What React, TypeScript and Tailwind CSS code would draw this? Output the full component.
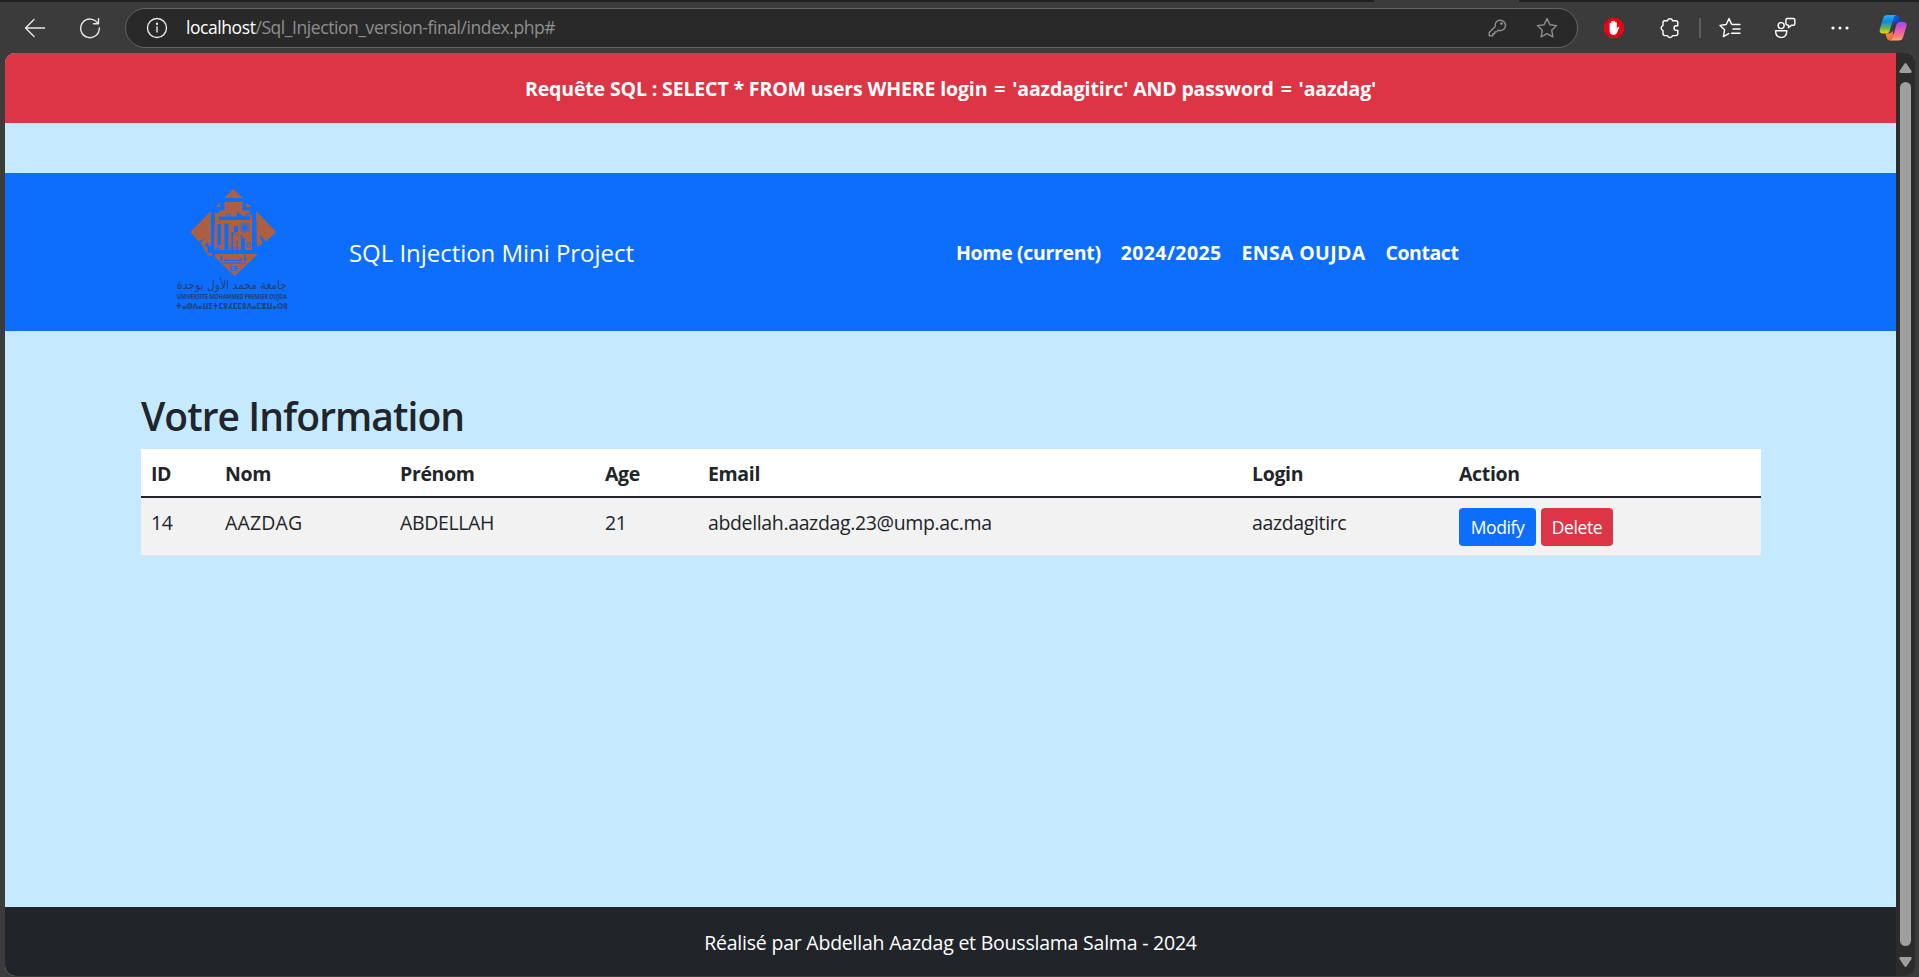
import type { ReactNode } from "react";

function Icon({ children, className }: { children: ReactNode; className: string }) {
  return (
    <svg viewBox="0 0 24 24" width="24" height="24" fill="none" strokeWidth="1.4" strokeLinecap="round" strokeLinejoin="round" className={`shrink-0 ${className}`}>
      {children}
    </svg>
  );
}

function CopilotLogo() {
  return (
    <svg viewBox="0 0 28 28" width="28" height="28" className="ml-[39px] shrink-0">
      <defs>
        <linearGradient id="cpLeft" x1="0" y1="0" x2="0" y2="1">
          <stop offset="0" stopColor="#22b4f5" />
          <stop offset="0.35" stopColor="#1287e0" />
          <stop offset="0.7" stopColor="#5fb35c" />
          <stop offset="1" stopColor="#fbd408" />
        </linearGradient>
        <linearGradient id="cpRight" x1="0" y1="0" x2="0" y2="1">
          <stop offset="0" stopColor="#9a4cf2" />
          <stop offset="0.45" stopColor="#e957b4" />
          <stop offset="0.8" stopColor="#fb7f77" />
          <stop offset="1" stopColor="#fdb15c" />
        </linearGradient>
        <linearGradient id="cpTop" x1="0" y1="0" x2="1" y2="1">
          <stop offset="0" stopColor="#1668dd" />
          <stop offset="1" stopColor="#0b2fc0" />
        </linearGradient>
        <linearGradient id="cpBottom" x1="0" y1="0" x2="1" y2="1">
          <stop offset="0" stopColor="#fba33c" />
          <stop offset="1" stopColor="#ee4f3c" />
        </linearGradient>
      </defs>
      <path d="M15 1h2c1.900 0 2.800 1 3.400 2.800L21.600 8h-3.200c-2 0-3 .8-3.600 3L13 4z" fill="url(#cpTop)" />
      <path d="M13 26.500h-2c-1.900 0-2.700-1-3.300-2.800L6.500 19.400h3c2 0 3-.8 3.600-3L15.200 23z" fill="url(#cpBottom)" />
      <path d="M8.800 1h8.400c-1.500.3-2.200 1.500-2.800 3.500l-3.600 12c-.7 2.200-1.700 3-3.800 3H4c-3 0-3.900-1.500-3.200-4.200L4 4.500C4.700 2 6 1 8.800 1z" fill="url(#cpLeft)" />
      <path d="M19.400 26.500H11c1.500-.3 2.200-1.500 2.800-3.500l3.500-11.800c.7-2.200 1.800-3.200 3.900-3.200h3c3 0 3.900 1.500 3.200 4.200L24.200 23c-.8 2.500-2 3.500-4.800 3.500z" fill="url(#cpRight)" />
    </svg>
  );
}

function Toolbar() {
  return (
    <header className="flex h-[53px] shrink-0 flex-col">
      <div className="flex h-[2px] bg-[#202020]">
        <div className="ml-[1374px] w-[145px] bg-[#3b3b3b]" />
      </div>
      <div className="flex h-[51px] items-center">
        <Icon className="ml-[23px] stroke-[#e8e8e8]">
          <path d="M21.500 12H2.500M11 3.500 2.500 12l8.500 8.500" />
        </Icon>
        <Icon className="ml-[31px] stroke-[#e8e8e8]">
          <path d="M20.500 2.800v5h-5M20 7.600A9.300 9.300 0 1 0 21.300 12" />
        </Icon>
        <div className="ml-[23px] flex h-[40px] w-[1453px] items-center rounded-full border border-[#646464] bg-[#292929]">
          <Icon className="ml-[19px] stroke-[#e8e8e8]">
            <circle cx="12" cy="12" r="9.500" />
            <path d="M12 10.800V16" />
            <circle cx="12" cy="7.800" r="0.500" className="fill-[#e8e8e8]" />
          </Icon>
          <div className="ml-[17px] pb-px text-[17.500px] leading-6 tracking-[-0.430px] text-[#8f8f8f]">
            <span className="text-white">localhost</span>/Sql_Injection_version-final/index.php#
          </div>
          <Icon className="ml-auto stroke-[#8e8e8e]">
            <path d="M14.500 4.300a5.200 5.200 0 1 1-1.300 9.900l-1.700 1.700H9.700v1.900H7.900v1.900H4.200v-3.200l6-6A5.200 5.200 0 0 1 14.500 4.300z" />
            <circle cx="16.500" cy="7.600" r="0.700" className="fill-[#8e8e8e]" />
          </Icon>
          <Icon className="mr-[18px] ml-[26px] stroke-[#8e8e8e]">
            <path d="m12 2.600 2.900 6.100 6.700.9-4.900 4.600 1.200 6.700-5.900-3.300-5.900 3.300 1.200-6.700L2.400 9.600l6.700-.9z" />
          </Icon>
        </div>
        <Icon className="ml-[24px]">
          <path d="M7.900 2h8.200L22 7.900v8.200L16.100 22H7.900L2 16.100V7.900z" fill="#e30613" />
          <path d="M7.600 12V7.300a.9.900 0 0 1 1.700 0V5.800a.95.950 0 0 1 1.800-.3.950.950 0 0 1 1.900.3v.7a.95.950 0 0 1 1.800.2v6l.9-1.500c.6-1 2-.6 1.500.5L15.300 16c-.7 1.900-1.900 2.900-3.700 2.900-2.700 0-4-1.700-4-3.900z" fill="#fff" />
        </Icon>
        <Icon className="ml-[32px] stroke-white">
          <path d="M6 4.700h3.400a2.700 2.700 0 0 1 5.200 0h3.200c1.200 0 2 .8 2 2v3.100h-1.500a2.300 2.300 0 0 0 0 4.600h1.500v3.200c0 1.200-.8 2-2 2h-3.200a2.700 2.700 0 0 1-5.200 0H7c-1.200 0-2-.8-2-2v-3a2.600 2.600 0 0 1 0-5V6.700c0-1.200.8-2 2-2z" />
        </Icon>
        <div className="ml-[17px] h-5 w-[2px] bg-[#5d5d5d]" />
        <Icon className="ml-[17px] stroke-white">
          <path d="M14.500 8.500 13.700 8.400 11 2.600 8.200 8.500 2 9.400l4.600 4.400-1.200 6.800 5.300-3M14.500 8.500h7.500M15 13h7M13.500 17.300H22" />
        </Icon>
        <Icon className="ml-[31px] stroke-white">
          <circle cx="8.200" cy="9.600" r="3" />
          <path d="M2.600 14.700h11.200c0 4.200-2.200 6.700-5.600 6.700s-5.600-2.500-5.600-6.700zM14.200 2.500h6.300c.8 0 1.300.5 1.300 1.300v4.100c0 .8-.5 1.300-1.300 1.300h-2l-3 2.600V9.200c-1.300 0-2.600-.4-2.600-1.700V3.800c0-.8.500-1.300 1.300-1.300z" />
        </Icon>
        <Icon className="ml-[31px] fill-white">
          <circle cx="5" cy="12" r="1.600" />
          <circle cx="12" cy="12" r="1.600" />
          <circle cx="19" cy="12" r="1.600" />
        </Icon>
        <div className="-ml-[12px]">
          <CopilotLogo />
        </div>
      </div>
    </header>
  );
}

function UniversityLogo() {
  return (
    <svg viewBox="0 0 184 150" width="184" height="150" className="mt-[5px] shrink-0">
      <g fill="#b0603f">
        <path d="M68.300 9 77.500 18H59z" />
        <path d="M59.500 22H77.500v8.500h7.200v6H78l-6-5v5H52.500l2-6h5z" />
        <path d="M55 22.500v4.500h-4zM81.500 22.500l4.500 4.500h-4.500z" />
        <path d="M46 31v35H43.500l-.5-4-4 3.500 3.500 2v5.500H47v2.500H43L35.500 63l5-5-7 3.500-8-9.500z" />
        <path d="M91 31 111 52 101 61.500l-6.500-7 3 9.500-5.500 2.500z" />
        <path d="M50 33h4v7h31v-6h2v36H49z" />
        <path d="M50 74h43L69.500 96 50 77z" />
      </g>
      <g fill="#0d6efd">
        <path d="M52.500 44h3.500v21h-3.500zM59.500 43.500h4v28h-4zM66.500 52h1.500v18h-1.500zM69 46h4v6h-4zM76 55h1.500v15H76z" />
        <circle cx="79.800" cy="47.500" r="2.600" />
        <circle cx="79.800" cy="47.500" r="5.500" opacity="0.450" />
        <path d="M76.500 60c2-4 4-2 3.600 2v8h-3zM50 71h37v1.600H50z" />
        <path d="M54 37h12v1.500H54zM74 37l6-1.500v3h-6zM55.500 76h2v5h-2zM59 79l4 1h10l4-2v3H59zM79 75h1.700v6H79zM56 82.500h25v1H56z" />
      </g>
      <g fill="none" stroke="#0d6efd" strokeWidth="0.900">
        <path d="M61.500 34h3.600v3.500h-3.600zM81.500 34h3.500v3.500h-3.500zM66 54.500l4-1.500 4 3M82 63h3.500v4H82zM50 68.500h5M52.500 66v5M66 86.500h5.500v4H66zM68 88.500h5M72 60v9M64 68h8" />
      </g>
      <g stroke="#0d6efd" strokeWidth="0.500" strokeDasharray="1 1.700" opacity="0.550">
        <path d="M63 24 60 35M66 23l-1 11M70 23v11M74 23l-1 11M31 48l14-1M29 51l16 0M31 54l14-2M93 38l8 9M93 45l14 6M94 50l12 4M52 75l10 6M60 75l8 18M76 75l-6 18M84 75 72 92" />
      </g>
      <g fill="#233f72">
        <text x="67" y="109" textAnchor="middle" textLength="110" lengthAdjust="spacingAndGlyphs" fontSize="12" direction="rtl" className="font-['DejaVu_Sans',sans-serif]">جامعة محمد الأول بوجدة</text>
        <text x="12" y="119" textLength="110" lengthAdjust="spacingAndGlyphs" fontSize="6.800" fontWeight="700" className="font-['Open_Sans',sans-serif]">UNIVERSITE MOHAMMED PREMIER OUJDA</text>
        <text x="11" y="128.500" textLength="112" lengthAdjust="spacingAndGlyphs" fontSize="8.500" fontWeight="700" className="font-['DejaVu_Sans',sans-serif]">ⵜⴰⵙⴷⴰⵡⵉⵜⵎⵓⵃⵎⵎⵓⴷⴰⵎⵣⵡⴰⵔⵓ</text>
      </g>
    </svg>
  );
}

const headers = ["ID", "Nom", "Prénom", "Age", "Email", "Login", "Action"];
const record = ["14", "AAZDAG", "ABDELLAH", "21", "abdellah.aazdag.23@ump.ac.ma", "aazdagitirc"];

function Records() {
  return (
    <table className="w-[1620px] table-fixed border-separate border-spacing-0 text-left text-[19.500px] text-[#212529]">
      <colgroup>
        <col className="w-[74px]" />
        <col className="w-[175px]" />
        <col className="w-[205px]" />
        <col className="w-[103px]" />
        <col className="w-[544px]" />
        <col className="w-[207px]" />
        <col />
      </colgroup>
      <thead>
        <tr className="bg-white">
          {headers.map((h) => (
            <th key={h} className="h-[49px] border-b-2 border-[#212529] px-[10px] pt-[3px] pb-0 leading-[30px] font-bold tracking-[-0.350px]">{h}</th>
          ))}
        </tr>
      </thead>
      <tbody>
        <tr className="bg-[#f2f2f2] align-top">
          {record.map((v) => (
            <td key={v} className={`h-[58px] border-b border-[#dee2e6] px-[10px] pt-[10px] pb-0 leading-[30px] ${v === "AAZDAG" ? "tracking-[0.150px]" : "tracking-[-0.360px]"}`}>{v}</td>
          ))}
          <td className="h-[58px] border-b border-[#dee2e6] px-[10px] pt-[10px] pb-0">
            <div className="flex gap-[5px] text-[17.500px] leading-[38px] tracking-[-0.400px] text-white">
              <button className="h-[38px] w-[77px] rounded-[4px] bg-[#0d6efd]">Modify</button>
              <button className="h-[38px] w-[72px] rounded-[4px] bg-[#dc3545]">Delete</button>
            </div>
          </td>
        </tr>
      </tbody>
    </table>
  );
}

function Page() {
  return (
    <div className="flex w-[1891px] flex-col bg-[#c5eaff]">
      <div className="h-[70px] bg-[#dc3545] pt-[2px] text-center text-[19.500px] leading-[68px] font-bold tracking-[-0.140px] text-white">
        Requête SQL : SELECT * FROM users WHERE login <span className="px-[2px]">=</span> 'aazdagitirc' AND password <span className="px-[2px]">=</span> 'aazdag'
      </div>
      <nav className="mt-[50px] flex h-[158px] items-center bg-[#0d6efd] pl-[160px] text-white">
        <UniversityLogo />
        <span className="w-[607px] pt-px text-[24px] tracking-[-0.040px]">SQL Injection Mini Project</span>
        <div className="flex gap-5 pt-[2px] text-[19.500px] font-bold">
          <a className="tracking-[-0.330px]">Home (current)</a>
          <a className="tracking-[0.400px]">2024/2025</a>
          <a className="tracking-[0.330px]">ENSA OUJDA</a>
          <a className="tracking-[-0.440px]">Contact</a>
        </div>
      </nav>
      <main className="flex flex-1 flex-col pt-[61px] pl-[136px]">
        <h1 className="mb-[9px] text-[39px] leading-[48px] font-[560] tracking-[-0.940px] text-[#212529]">Votre Information</h1>
        <Records />
      </main>
      <footer className="flex h-[69px] items-center justify-center bg-[#212529] pt-[2px] text-[19.500px] tracking-[-0.220px] text-white">
        Réalisé par Abdellah Aazdag et Bousslama Salma - 2024
      </footer>
    </div>
  );
}

function Scrollbar() {
  return (
    <div className="flex w-[19px] flex-col items-center bg-[#2c2c2c] pt-[10px] pb-[9px]">
      <svg width="13" height="10" viewBox="0 0 13 10" fill="#9f9f9f">
        <path d="M5.400.8 0.500 8c-.5 1 0 2 1 2h10c1 0 1.500-1 1-2L7.600.8c-.6-1-1.600-1-2.200 0z" />
      </svg>
      <div className="mt-[9px] mb-[11px] w-[11px] flex-1 rounded-full bg-[#9f9f9f]" />
      <svg width="13" height="10" viewBox="0 0 13 10" fill="#9f9f9f">
        <path d="M5.400 9.200.5 2C0 1 .5 0 1.500 0h10c1 0 1.500 1 1 2L7.600 9.200c-.6 1-1.600 1-2.200 0z" />
      </svg>
    </div>
  );
}

export default function App() {
  return (
    <div className="flex h-[977px] w-[1919px] flex-col overflow-hidden bg-[#3b3b3b] font-['Open_Sans','Noto_Sans',sans-serif]">
      <Toolbar />
      <div className="ml-[5px] flex h-[923px] w-[1910px] overflow-hidden rounded-[10px]">
        <Page />
        <Scrollbar />
      </div>
    </div>
  );
}
